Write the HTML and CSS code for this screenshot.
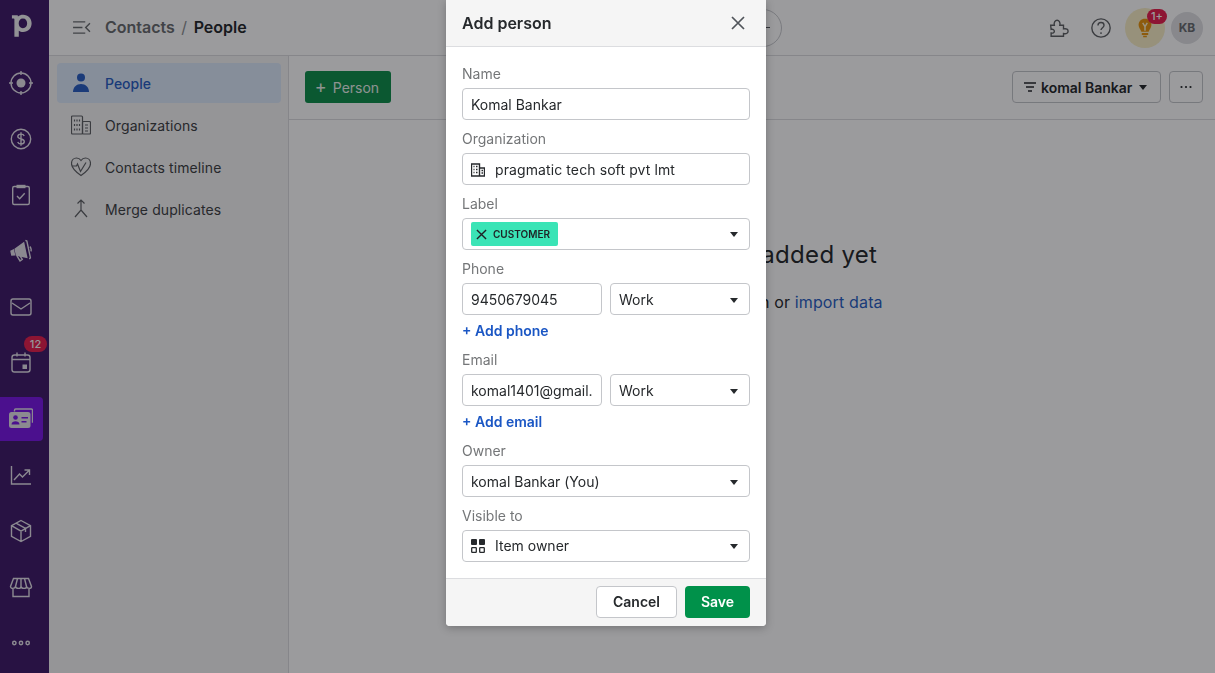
FILE: index.html
```html
<!DOCTYPE html>
<html lang="en">
<head>
<meta charset="utf-8">
<title>Add person</title>
<link rel="stylesheet" href="styles.css">
</head>
<body>
<div class="app">
  <nav class="rail">
    <div class="logo"><svg viewBox="0 0 24 28"><path class="fill" fill-rule="evenodd" d="M1 4.500h6.300l.3 1.400C9 4.500 11 3.800 13.200 3.800c5.600 0 9.300 4 9.300 9.500 0 5.600-3.800 9.400-9.300 9.400-1.900 0-3.500-.5-4.700-1.400v6.700H3.700V8.800c0-.5-.2-.8-.8-.8H1zM13 8c-3 0-4.600 2.300-4.600 5.300 0 3 1.600 5.200 4.600 5.200s4.600-2.200 4.600-5.200S16 8 13 8z"/></svg></div>
    <a class="rail-item"><svg viewBox="0 0 24 24"><circle cx="12" cy="12" r="10"/><circle class="fill" cx="12" cy="12" r="4.500"/><path d="M12 0v4M12 20v4M0 12h4M20 12h4"/></svg></a>
    <a class="rail-item"><svg viewBox="0 0 24 24"><circle cx="12" cy="12" r="9.700"/><path d="M15.200 9c-.4-1.200-1.700-1.900-3.200-1.900-1.800 0-3.200.9-3.200 2.400 0 3.300 6.500 1.600 6.500 5 0 1.600-1.500 2.500-3.300 2.500-1.600 0-2.900-.8-3.300-2M12 5.200v13.600"/></svg></a>
    <a class="rail-item"><svg viewBox="0 0 24 24"><rect x="3.700" y="3.500" width="16.600" height="18" rx="1.500"/><path class="fill" d="M7.500 1.800h9v3.400h-9z"/><path d="M8 13l2.700 2.700 5-5.400"/></svg></a>
    <a class="rail-item"><svg viewBox="0 0 24 24"><g transform="rotate(-12 12 12)"><path class="fill" d="M1.500 9.500l4-.8v6.600l-4-.8zM6 8.500l11-5v17l-11-5z"/><path d="M18.500 2.500l1.300 1v17l-1.300 1M21.500 9.500c1 1 1 4 0 5M7 16l2 5.500 2.500-1-1.500-4"/></g></svg></a>
    <a class="rail-item"><svg viewBox="0 0 24 24"><rect x="2" y="4" width="20" height="16" rx="2"/><path d="M3 8l9 6 9-6"/></svg></a>
    <a class="rail-item"><svg viewBox="0 0 24 24"><rect x="3" y="4" width="18" height="17" rx="2.500"/><path d="M3 8.500h18M8 1.500v4M16 1.500v4"/><path class="fill" d="M13.500 13.500h4.500v4.500h-4.500z"/></svg><span class="rail-badge">12</span></a>
    <a class="rail-item rail-active"><svg viewBox="0 0 24 24"><path d="M5.500 4.500V3.200C5.500 2.500 6 2 6.700 2h15.600c.7 0 1.200.5 1.200 1.200v12.600"/><rect class="fill" x="0" y="5" width="21.500" height="16" rx="2.500"/><circle class="cut" cx="6.500" cy="10.500" r="2.300"/><path class="cut" d="M2.500 17.500c0-4.300 8-4.300 8 0zM12.500 10h6.500v1.500h-6.500zM12.500 14h5v1.500h-5z"/></svg></a>
    <a class="rail-item"><svg viewBox="0 0 24 24"><path d="M2.500 3v18H22M5 17l5.500-6 3 3L20 7.500M15.500 7H20.500V12"/></svg></a>
    <a class="rail-item"><svg viewBox="0 0 24 24"><path d="M12 1.500l9.500 5.200v10.600L12 22.500 2.500 17.300V6.700zM2.500 6.700l9.500 5.500 9.500-5.500M12 12.200v10.300M7 4.200l9.500 5.300v3.500"/></svg></a>
    <a class="rail-item"><svg viewBox="0 0 24 24"><path d="M4.500 3.500h15l3 8c0 2.500-4.500 2.500-5 0 0 2.500-5 2.500-5.500 0 0 2.500-5 2.500-5.500 0-.5 2.500-5 2.500-5 0zM4 14v7.500h16V14M8.500 3.500l-2 8M12 3.500v8M15.500 3.500l2 8"/></svg></a>
    <a class="rail-item rail-more"><svg viewBox="0 0 24 24"><circle cx="4" cy="12" r="2"/><circle cx="12" cy="12" r="2"/><circle cx="20" cy="12" r="2"/></svg></a>
  </nav>

  <div class="main">
    <header class="topbar">
      <svg class="menu-icon" viewBox="0 0 20 16"><path d="M1 2h13M1 8h10M1 14h13M19 3.500L14.500 8l4.500 4.500"/></svg>
      <div class="crumbs"><span class="crumb-root">Contacts</span><span class="crumb-sep">/</span><strong>People</strong></div>
      <div class="search-stub"><span class="search-dash"></span></div>
      <div class="top-actions">
        <svg class="top-icon" viewBox="0 0 24 24"><path d="M4 9h4c-.8-3.500 1-5.500 3-5.500s3.800 2 3 5.500h4v4c3.500-.8 5 .8 5 2.500s-1.500 3.300-5 2.500v3H4.500v-3.500c2.500.5 3.500-.8 3.500-2s-1-2.500-3.500-2z"/></svg>
        <svg class="top-icon help" viewBox="0 0 24 24"><circle cx="12" cy="12" r="10"/><path d="M8.700 9.300c0-2 1.500-3.300 3.300-3.300s3.300 1.200 3.300 3c0 2.700-3.300 2.600-3.300 5.300M12 16.500v2"/></svg>
        <div class="bulb">
          <svg viewBox="0 0 24 24"><path class="bulb-fill" d="M12 2c-4.200 0-7 3-7 6.700 0 3 2.200 4.500 3 7.300h8c.8-2.800 3-4.300 3-7.300C19 5 16.200 2 12 2zM8.500 17.500h7v2h-7zM10 20.500h4V22h-4z"/><path class="bulb-y" d="M9.500 6.500l2.500 4 2.500-4M12 10.500V15"/></svg>
          <span class="bulb-badge">1+</span>
        </div>
        <div class="avatar">KB</div>
      </div>
    </header>
    <div class="body">
      <aside class="subnav">
        <a class="sub-item sub-active"><svg viewBox="0 0 20 20"><circle class="solid" cx="10" cy="4.500" r="4"/><path class="solid" d="M2 19c0-5 3.500-8 8-8s8 3 8 8z"/></svg>People</a>
        <a class="sub-item"><svg viewBox="0 0 20 20"><rect x=".5" y="1" width="11" height="18" rx="1"/><rect x="11.500" y="6.500" width="8" height="12.500" rx="1"/><path d="M3.500 4.500v2M6 4.500v2M8.500 4.500v2M3.500 9v2M6 9v2M8.500 9v2M3.500 13.500v2M6 13.500v2M8.500 13.500v2M14 10h3M14 13h3M14 16h3"/></svg>Organizations</a>
        <a class="sub-item"><svg viewBox="0 0 20 20"><path d="M10 18.500C5 15 .5 11 .5 6.500.5 3 3 1 5.500 1 7.500 1 9 2 10 3.500 11 2 12.500 1 14.500 1c2.500 0 5 2 5 5.500C19.500 11 15 15 10 18.500z"/><path d="M1 9h4.500l1-2 3 7.500 5.500-9"/></svg>Contacts timeline</a>
        <a class="sub-item"><svg viewBox="0 0 20 20"><path d="M6.500 4.500L10 1l3.500 3.500M10 1v10M4 18l6-7 6 7"/></svg>Merge duplicates</a>
      </aside>
      <section class="content">
        <div class="toolbar">
          <button class="btn-person"><span class="plus">+</span>Person</button>
          <div class="toolbar-right">
            <button class="btn-filter"><svg viewBox="0 0 14 10"><path d="M1 1h12M3 5h8M5 9h4"/></svg>komal Bankar<i class="caret"></i></button>
            <button class="btn-more"><svg viewBox="0 0 14 4"><circle cx="2.500" cy="2" r="1.100"/><circle cx="7" cy="2" r="1.100"/><circle cx="11.500" cy="2" r="1.100"/></svg></button>
          </div>
        </div>
        <div class="empty">
          <h2>No people added yet</h2>
          <p>Add person or <a>import data</a></p>
        </div>
      </section>
    </div>
  </div>
</div>

<div class="overlay"></div>

<div class="modal-wrap">
  <div class="modal">
    <header class="modal-head">
      <h1>Add person</h1>
      <svg class="close" viewBox="0 0 14 14"><path d="M1 1l12 12M13 1L1 13"/></svg>
    </header>
    <form class="modal-body">
      <div class="field">
        <label>Name</label>
        <input class="control" value="Komal Bankar">
      </div>
      <div class="field">
        <label>Organization</label>
        <div class="control with-icon low org-name">
          <svg class="lead org" viewBox="0 0 14 14"><path d="M.5 1h8v12h-8zM8.500 5h5v8h-5zM2.500 3.500h1M5 3.500h1.500M2.500 6.500h1M5 6.500h1.500M2.500 9.500h1M5 9.500h1.500M10.500 7.500h1.500M10.500 10h1.500"/></svg>
          pragmatic tech soft pvt lmt
        </div>
      </div>
      <div class="field">
        <label>Label</label>
        <div class="control select">
          <span class="tag"><svg viewBox="0 0 12 12"><path d="M1 1l10 10M11 1L1 11"/></svg>CUSTOMER</span>
          <i class="caret"></i>
        </div>
      </div>
      <div class="field">
        <label>Phone</label>
        <div class="pair">
          <input class="control" value="9450679045">
          <div class="control select low">Work<i class="caret"></i></div>
        </div>
        <a class="add-link">+ Add phone</a>
      </div>
      <div class="field">
        <label>Email</label>
        <div class="pair">
          <input class="control" value="komal1401@gmail.com">
          <div class="control select low">Work<i class="caret"></i></div>
        </div>
        <a class="add-link">+ Add email</a>
      </div>
      <div class="field">
        <label>Owner</label>
        <div class="control select low">komal Bankar (You)<i class="caret"></i></div>
      </div>
      <div class="field">
        <label>Visible to</label>
        <div class="control select with-icon">
          <svg class="lead" viewBox="0 0 14 14"><rect class="grid-solid" x="0" y="0" width="6" height="6" rx="1"/><rect class="grid-solid" x="8" y="0" width="6" height="6" rx="1"/><rect class="grid-line" x=".7" y="8.700" width="4.600" height="4.600" rx=".6"/><rect class="grid-line" x="8.700" y="8.700" width="4.600" height="4.600" rx=".6"/></svg>
          Item owner<i class="caret"></i>
        </div>
      </div>
    </form>
    <footer class="modal-foot">
      <button class="btn-cancel">Cancel</button>
      <button class="btn-save">Save</button>
    </footer>
  </div>
</div>
</body>
</html>
```
FILE: styles.css
```css
* { box-sizing: border-box; }
html, body { height: 100%; margin: 0; }
body {
  font-family: Inter, "Liberation Sans", sans-serif;
  font-size: 14px;
  color: #26292c;
  overflow: hidden;
  background: #fff;
}
svg { display: block; fill: none; stroke: currentColor; }

.app { display: flex; height: 673px; }

/* left rail */
.rail {
  width: 49px;
  flex: none;
  background: #401b6a;
  color: #e4e2ea;
  display: flex;
  flex-direction: column;
  align-items: flex-start;
  overflow: hidden;
}
.logo {
  height: 56px;
  width: 44px;
  flex: none;
  padding: 11px 0 0 11px;
  color: #f0f0f2;
}
.logo svg { width: 22px; height: 26px; }
.rail-item {
  position: relative;
  flex: none;
  width: 43px;
  height: 44px;
  margin-bottom: 12px;
  display: flex;
  align-items: center;
  justify-content: center;
  border-radius: 0 4px 4px 0;
}
.logo + .rail-item { margin-top: 5px; }
.rail-item svg { width: 24px; height: 24px; stroke-width: 1.400; margin-left: -1px; }
.rail .fill { fill: currentColor; stroke: none; }
.rail .cut { fill: #7a18e6; stroke: none; }
.rail-active { background: #7a18e6; }
.rail-more svg { width: 20px; height: 20px; stroke-width: 1.800; }
.rail-badge {
  position: absolute;
  left: 24px;
  top: -5px;
  width: 23px;
  height: 16px;
  border-radius: 8px;
  background: #e8214f;
  color: #f7f7f7;
  font-size: 11px;
  font-weight: 500;
  line-height: 16px;
  text-align: center;
}

.main { flex: 1; min-width: 0; display: flex; flex-direction: column; }

/* top bar */
.topbar {
  height: 56px;
  flex: none;
  display: flex;
  align-items: center;
  padding: 0 12px 0 23px;
  border-bottom: 1px solid #dcdde0;
  background: #fff;
}
.menu-icon { width: 19px; height: 15px; stroke-width: 1.500; color: #6a6d70; margin-right: 14px; }
.crumbs { display: flex; align-items: center; font-size: 16px; gap: 6.500px; padding-bottom: 2px; }
.crumb-root { color: #6a6d70; font-weight: 600; }
.crumb-sep { color: #8c8f92; }
.crumbs strong { font-weight: 600; }
.search-stub {
  width: 300px;
  height: 38px;
  margin-left: 235px;
  border: 1px solid #c8cace;
  border-radius: 19px;
  display: flex;
  align-items: center;
  justify-content: flex-end;
  padding-right: 11px;
}
.search-dash { width: 4px; height: 1.500px; background: #50545a; }
.top-actions { margin-left: auto; display: flex; align-items: center; }
.top-icon { width: 22px; height: 22px; stroke-width: 1.500; color: #5f6265; margin-right: 20px; }
.top-icon.help { margin-right: 13px; margin-left: 1px; }
.bulb {
  position: relative;
  width: 40px;
  height: 40px;
  border-radius: 50%;
  background: #f8efc6;
  display: flex;
  align-items: center;
  justify-content: center;
  margin-right: 6px;
}
.bulb svg { width: 22px; height: 22px; }
.bulb-fill { fill: #e8950f; stroke: none; }
.bulb-y { stroke: #fdf3cf; stroke-width: 1.600; }
.bulb-badge {
  position: absolute;
  left: 22px;
  top: 1px;
  width: 20px;
  height: 15px;
  border-radius: 8px;
  background: #e8214f;
  color: #fff;
  font-size: 11px;
  font-weight: 500;
  line-height: 15px;
  text-align: center;
}
.avatar {
  width: 32px;
  height: 32px;
  border-radius: 50%;
  background: #dfe0e3;
  color: #6a6d70;
  font-size: 12px;
  font-weight: 700;
  line-height: 32px;
  text-align: center;
}

.body { flex: 1; display: flex; min-height: 0; }

/* sub navigation */
.subnav {
  width: 240px;
  flex: none;
  padding: 7px 7px 7px 8px;
  background: #f5f5f6;
  border-right: 1px solid #dcdde0;
  display: flex;
  flex-direction: column;
  gap: 2px;
}
.sub-item {
  height: 40px;
  display: flex;
  align-items: center;
  gap: 14px;
  padding-left: 14px;
  border-radius: 4px;
  color: #3e4144;
  letter-spacing: .1px;
}
.sub-item svg { width: 20px; height: 20px; flex: none; stroke-width: 1.200; color: #5f6265; }
.sub-active { background: #dce9fb; color: #2a5fc4; font-weight: 500; letter-spacing: 0; }
.sub-active svg { color: #2a5fc4; }
.solid { fill: currentColor; stroke: none; }

/* content */
.content { flex: 1; min-width: 0; display: flex; flex-direction: column; background: #fff; }
.toolbar {
  height: 64px;
  flex: none;
  display: flex;
  align-items: flex-start;
  justify-content: space-between;
  padding: 15px 12px 0 16px;
  border-bottom: 1px solid #dcdde0;
}
button { font-family: inherit; font-size: 14px; cursor: pointer; }
.btn-person {
  height: 32px;
  width: 86px;
  border: 0;
  border-radius: 3px;
  background: #0f8f4c;
  color: #e9f2ec;
  display: flex;
  align-items: center;
  justify-content: center;
  gap: 6px;
  padding: 0 2px 0 0;
}
.plus { font-size: 18px; line-height: 18px; font-weight: 400; }
.toolbar-right { display: flex; gap: 8px; }
.btn-filter, .btn-more {
  height: 32px;
  border: 1px solid #c4c6ca;
  border-radius: 4px;
  background: #fff;
  display: flex;
  align-items: center;
  color: #26292c;
}
.btn-filter { width: 149px; padding: 0 0 0 10px; font-weight: 600; }
.btn-filter svg { width: 14px; height: 10px; stroke-width: 1.300; margin-right: 4px; }
.btn-filter .caret { margin-left: 7px; }
.btn-more { width: 34px; justify-content: center; padding: 0; }
.btn-more svg { width: 14px; height: 4px; fill: currentColor; stroke: none; }
.empty { text-align: center; padding-top: 117px; }
.empty h2 { margin: 0; padding-left: 8px; font-size: 24px; font-weight: 400; line-height: 36px; letter-spacing: .3px; white-space: nowrap; }
.empty p { margin: 18px 0 0; padding-left: 59px; font-size: 16px; line-height: 22px; letter-spacing: .15px; }
.empty a { color: #2a5fc4; }

.caret {
  display: block;
  width: 0;
  height: 0;
  border-left: 4.500px solid transparent;
  border-right: 4.500px solid transparent;
  border-top: 5px solid currentColor;
}

/* modal */
.overlay {
  position: fixed;
  inset: 0;
  background: rgba(4, 4, 10, 0.4);
}
.modal-wrap {
  position: fixed;
  inset: 0;
  display: flex;
  justify-content: center;
  align-items: flex-start;
  padding-right: 3px;
}
.modal {
  width: 320px;
  background: #fff;
  border-radius: 0 0 4px 4px;
  box-shadow: 0 2px 8px rgba(0, 0, 0, 0.25);
  overflow: hidden;
}
.modal-head {
  height: 47px;
  display: flex;
  align-items: center;
  justify-content: space-between;
  padding: 0 21px 0 16px;
  background: #f5f5f5;
  border-bottom: 1px solid #dcdde0;
}
.modal-head h1 { margin: 0; font-size: 16px; font-weight: 600; }
.close { width: 14px; height: 14px; stroke-width: 1.700; color: #50545a; }
.modal-body {
  display: flex;
  flex-direction: column;
  gap: 9px;
  padding: 17px 16px 16px;
}
.field label {
  display: block;
  height: 20px;
  margin-bottom: 4px;
  line-height: 20px;
  color: #747678;
}
.control {
  width: 100%;
  height: 32px;
  padding: 0 8px;
  border: 1px solid #c4c6ca;
  border-radius: 4px;
  background: #fff;
  font: 14px Inter, "Liberation Sans", sans-serif;
  color: #26292c;
  line-height: 30px;
  outline: none;
}
.select {
  display: flex;
  align-items: center;
  justify-content: space-between;
}
.with-icon { display: flex; align-items: center; }
.org-name { letter-spacing: .1px; }
.low { padding-top: 2px; }
.lead { width: 14px; height: 14px; flex: none; margin-right: 10px; stroke-width: 1.400; }
.org { color: #26292c; }
.select.with-icon .caret { margin-left: auto; }
.select .caret { margin-right: 3px; }
.grid-solid { fill: #26292c; stroke: none; }
.grid-line { fill: none; stroke: #26292c; stroke-width: 1.300; }
.tag {
  display: flex;
  align-items: center;
  gap: 6px;
  height: 24px;
  width: 87px;
  padding-left: 5px;
  background: #3ae4b6;
  border-radius: 2px;
  font-size: 10px;
  font-weight: 600;
  color: #1f2225;
}
.tag svg { width: 11px; height: 11px; stroke-width: 1.500; }
.pair { display: grid; grid-template-columns: 140px 140px; gap: 8px; }
.add-link {
  display: block;
  margin-top: 6px;
  line-height: 20px;
  font-weight: 600;
  color: #1a56c4;
}
.modal-foot {
  height: 48px;
  display: flex;
  align-items: center;
  justify-content: flex-end;
  gap: 8px;
  padding: 0 16px 2px;
  background: #f5f5f5;
  border-top: 1px solid #dcdde0;
}
.btn-cancel, .btn-save {
  height: 32px;
  border-radius: 4px;
  font-weight: 600;
  padding: 0;
}
.btn-cancel { width: 81px; background: #fff; border: 1px solid #c4c6ca; color: #26292c; }
.btn-save { width: 65px; background: #00914a; border: 0; color: #fff; }
```
